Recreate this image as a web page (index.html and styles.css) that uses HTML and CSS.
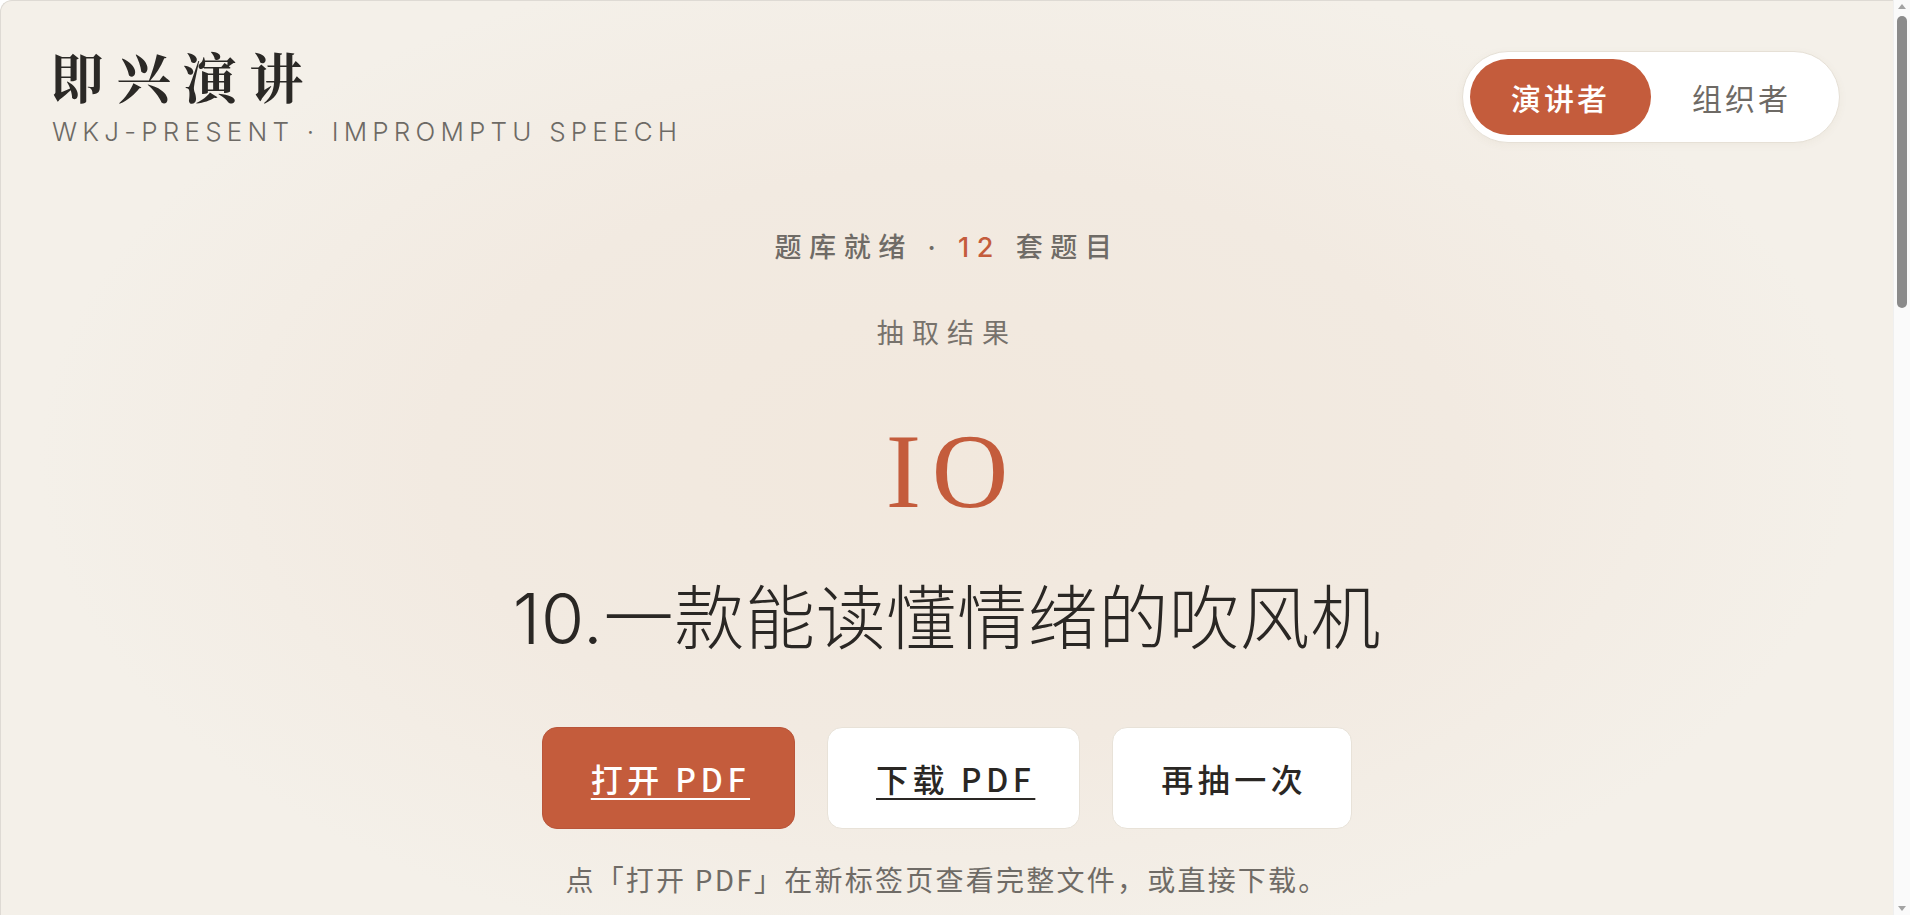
FILE: index.html
```html
<!DOCTYPE html>
<html lang="zh-CN">
<head>
    <meta charset="UTF-8">
    <meta name="viewport" content="width=device-width, initial-scale=1.0">
    <title>即兴演讲 - WKJ Present</title>
    <link rel="stylesheet" href="styles.css">
</head>
<body>
<div class="page">
    <header class="topbar">
        <div class="brand">
            <h1 class="brand-title">即兴演讲</h1>
            <p class="brand-sub">WKJ-PRESENT · IMPROMPTU SPEECH</p>
        </div>
        <nav class="role-switch">
            <button class="role active">演讲者</button>
            <button class="role">组织者</button>
        </nav>
    </header>

    <main class="stage">
        <p class="status">题库就绪 · <span class="count">12</span> 套题目</p>
        <p class="result-label">抽取结果</p>
        <div class="draw-number">IO</div>
        <h2 class="topic">10.一款能读懂情绪的吹风机</h2>

        <div class="actions">
            <a class="btn btn-primary" href="#">打开 PDF</a>
            <a class="btn" href="#">下载 PDF</a>
            <button class="btn">再抽一次</button>
        </div>

        <p class="hint">点「打开 PDF」在新标签页查看完整文件，或直接下载。</p>
    </main>
</div>

<!-- barre de défilement (la capture la montre, le navigateur headless non) -->
<div class="scrollbar">
    <span class="scroll-arrow up"></span>
    <span class="scroll-thumb"></span>
    <span class="scroll-arrow down"></span>
</div>
</body>
</html>
```

FILE: styles.css
```css
body {
    margin: 0;
    background: #fff;
    font-family: 'Inter', 'Noto Sans CJK SC', sans-serif;
    color: #2a2724;
}

.page {
    min-height: 2760px;
    margin-right: 17px;
    border: 1px solid #dedad4;
    border-right: 0;
    border-radius: 12px 0 0 0;
    background: radial-gradient(ellipse 60% 70% at 50% 50%, #f2e8dd 0%, #f2eae1 45%, #f4f0e9 80%);
    background-color: #f4f0e9;
    background-repeat: no-repeat;
    background-size: 100% 915px;
}

.topbar {
    display: flex;
    justify-content: space-between;
    align-items: center;
    padding: 45px 53px 0 49px;
}

.brand-title {
    margin: 0;
    font-family: 'Noto Serif CJK SC', 'Source Han Serif SC', 'Songti SC', serif;
    font-size: 54px;
    font-weight: 700;
    line-height: 1.1;
    letter-spacing: 0.23em;
    color: #2b2926;
}

.brand-sub {
    margin: 11px 0 0 2px;
    font-size: 26px;
    font-weight: 300;
    line-height: 1.2;
    letter-spacing: 0.2em;
    color: #6d6a65;
}

.role-switch {
    display: flex;
    padding: 7px;
    background: #fff;
    border: 1px solid #e6e0d6;
    border-radius: 50px;
    box-shadow: 0 2px 8px rgba(120, 90, 60, 0.05);
}

.role {
    width: 181px;
    height: 76px;
    border: 0;
    border-radius: 40px;
    background: transparent;
    font-family: 'Noto Sans CJK SC', sans-serif;
    font-size: 30px;
    letter-spacing: 0.1em;
    color: #6e6a65;
    cursor: pointer;
}

.role.active {
    background: #c45c3c;
    color: #fff;
    font-weight: 500;
}

.stage {
    display: flex;
    flex-direction: column;
    align-items: center;
    padding-top: 81px;
    text-align: center;
}

.status {
    margin: 0;
    font-family: 'Inter', 'Noto Sans CJK SC', sans-serif;
    font-size: 27px;
    font-weight: 500;
    line-height: 1.4;
    letter-spacing: 0.28em;
    color: #6f6b66;
}

.status .count {
    color: #c45c3c;
}

.result-label {
    margin: 47px 0 0 0;
    font-family: 'Noto Sans CJK SC', sans-serif;
    font-size: 27px;
    line-height: 1.4;
    letter-spacing: 0.3em;
    color: #77726c;
}

.draw-number {
    margin-top: 68px;
    padding-left: 0.1em;
    font-family: 'Liberation Serif', serif;
    font-size: 106px;
    line-height: 1;
    letter-spacing: 0.1em;
    color: #c45c3c;
}

.topic {
    margin: 52px 0 0 0;
    font-family: 'Inter', 'Noto Sans CJK SC', sans-serif;
    font-size: 70px;
    font-weight: 300;
    line-height: 1.2;
    letter-spacing: 0.01em;
    color: #2a2724;
}

.actions {
    display: flex;
    gap: 32px;
    margin-top: 66px;
}

.btn {
    display: inline-flex;
    align-items: center;
    justify-content: center;
    box-sizing: border-box;
    height: 102px;
    padding: 0 44px 0 48px;
    background: #fff;
    border: 1px solid #e8e2d8;
    border-radius: 15px;
    font-family: 'Noto Sans CJK SC', sans-serif;
    font-size: 32px;
    font-weight: 500;
    letter-spacing: 0.14em;
    color: #2a2724;
    text-decoration: underline;
    text-underline-offset: 6px;
    text-decoration-thickness: 2px;
    cursor: pointer;
}

button.btn {
    text-decoration: none;
}

.btn-primary {
    background: #c45c3c;
    border-color: #b9553a;
    color: #fff;
}

.hint {
    margin: 31px 0 0 0;
    font-family: 'Noto Sans CJK SC', sans-serif;
    font-size: 28px;
    line-height: 1.4;
    letter-spacing: 0.08em;
    color: #6f6b66;
}

.scrollbar {
    position: fixed;
    top: 0;
    right: 0;
    width: 17px;
    height: 100vh;
    background: #fafafa;
    border-left: 1px solid #efefef;
    box-sizing: border-box;
}

.scroll-thumb {
    position: absolute;
    top: 16px;
    left: 3px;
    width: 10px;
    height: 292px;
    border-radius: 5px;
    background: #8b8b8b;
}

.scroll-arrow {
    position: absolute;
    left: 4px;
    width: 0;
    height: 0;
    border-left: 4px solid transparent;
    border-right: 4px solid transparent;
}

.scroll-arrow.up {
    top: 4px;
    border-bottom: 5px solid #a3a3a3;
}

.scroll-arrow.down {
    bottom: 4px;
    border-top: 5px solid #a3a3a3;
}
```
